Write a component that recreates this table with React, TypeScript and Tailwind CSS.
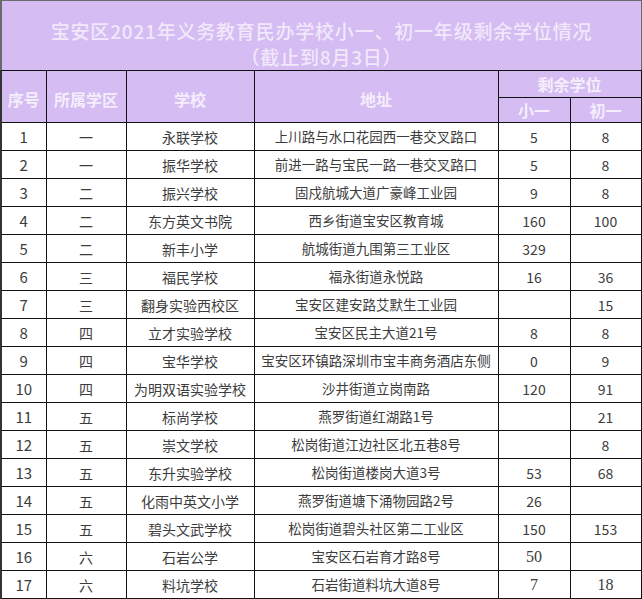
const rows: [string, string, string, string, string, string, boolean?][] = [
  ['1', '一', '永联学校', '上川路与水口花园西一巷交叉路口', '5', '8'],
  ['2', '一', '振华学校', '前进一路与宝民一路一巷交叉路口', '5', '8'],
  ['3', '二', '振兴学校', '固戍航城大道广豪峰工业园', '9', '8'],
  ['4', '二', '东方英文书院', '西乡街道宝安区教育城', '160', '100'],
  ['5', '二', '新丰小学', '航城街道九围第三工业区', '329', ''],
  ['6', '三', '福民学校', '福永街道永悦路', '16', '36'],
  ['7', '三', '翻身实验西校区', '宝安区建安路艾默生工业园', '', '15'],
  ['8', '四', '立才实验学校', '宝安区民主大道21号', '8', '8'],
  ['9', '四', '宝华学校', '宝安区环镇路深圳市宝丰商务酒店东侧', '0', '9'],
  ['10', '四', '为明双语实验学校', '沙井街道立岗南路', '120', '91'],
  ['11', '五', '标尚学校', '燕罗街道红湖路1号', '', '21'],
  ['12', '五', '崇文学校', '松岗街道江边社区北五巷8号', '', '8'],
  ['13', '五', '东升实验学校', '松岗街道楼岗大道3号', '53', '68'],
  ['14', '五', '化雨中英文小学', '燕罗街道塘下涌物园路2号', '26', ''],
  ['15', '五', '碧头文武学校', '松岗街道碧头社区第二工业区', '150', '153'],
  ['16', '六', '石岩公学', '宝安区石岩育才路8号', '50', '', true],
  ['17', '六', '料坑学校', '石岩街道料坑大道8号', '7', '18', true],
];

const font = { fontFamily: '"Noto Sans CJK SC", "Noto Sans", sans-serif' };
const serif = { fontFamily: '"Liberation Serif", serif', fontSize: 16 };

export default function App() {
  return (
    <div className="w-[642px] h-[599px] bg-[#eeeeee] overflow-hidden" style={font}>
      <div className="h-[70px] bg-[#d5bcf2] border-l-2 border-t border-r border-[#6a6a6a] flex flex-col items-center pt-[17px] text-[#f1e8fb] text-[19px] font-medium leading-[26px] tracking-[0.8px]">
        <div>宝安区2021年义务教育民办学校小一、初一年级剩余学位情况</div>
        <div>（截止到8月3日）</div>
      </div>
      <table className="w-[640px] table-fixed border-collapse border-l-2 border-[#333]">
        <colgroup>
          <col className="w-[45px]" />
          <col className="w-[80px]" />
          <col className="w-[128px]" />
          <col className="w-[244px]" />
          <col className="w-[72px]" />
          <col className="w-[71px]" />
        </colgroup>
        <thead className="bg-[#d5bcf2] text-[#f4eefc] font-bold text-[16px]">
          <tr className="h-[27px]">
            <th rowSpan={2} className="border border-[#111] font-bold pt-[4px]">序号</th>
            <th rowSpan={2} className="border border-[#111] font-bold pt-[4px]">所属学区</th>
            <th rowSpan={2} className="border border-[#111] font-bold pt-[4px]">学校</th>
            <th rowSpan={2} className="border border-[#111] font-bold pt-[4px]">地址</th>
            <th colSpan={2} className="border border-[#111] font-bold leading-none">剩余学位</th>
          </tr>
          <tr className="h-[25px]">
            <th className="border border-[#111] font-bold leading-none">小一</th>
            <th className="border border-[#111] font-bold leading-none">初一</th>
          </tr>
        </thead>
        <tbody className="bg-white text-[#3c3c3c] text-[14px]">
          {rows.map((r) => (
            <tr key={r[0]} className="h-[28px]">
              <td className="border border-[#111] text-center text-[15px] leading-none">{r[0]}</td>
              <td className="border border-[#111] text-center leading-none">{r[1]}</td>
              <td className="border border-[#111] text-center leading-none">{r[2]}</td>
              <td className="border border-[#111] text-center leading-none text-[13.5px]">{r[3]}</td>
              <td className="border border-[#111] text-center leading-none text-[14px]" style={r[6] ? serif : undefined}>
                {r[4]}
              </td>
              <td className="border border-[#111] text-center leading-none text-[14px]" style={r[6] ? serif : undefined}>
                {r[5]}
              </td>
            </tr>
          ))}
        </tbody>
      </table>
    </div>
  );
}
